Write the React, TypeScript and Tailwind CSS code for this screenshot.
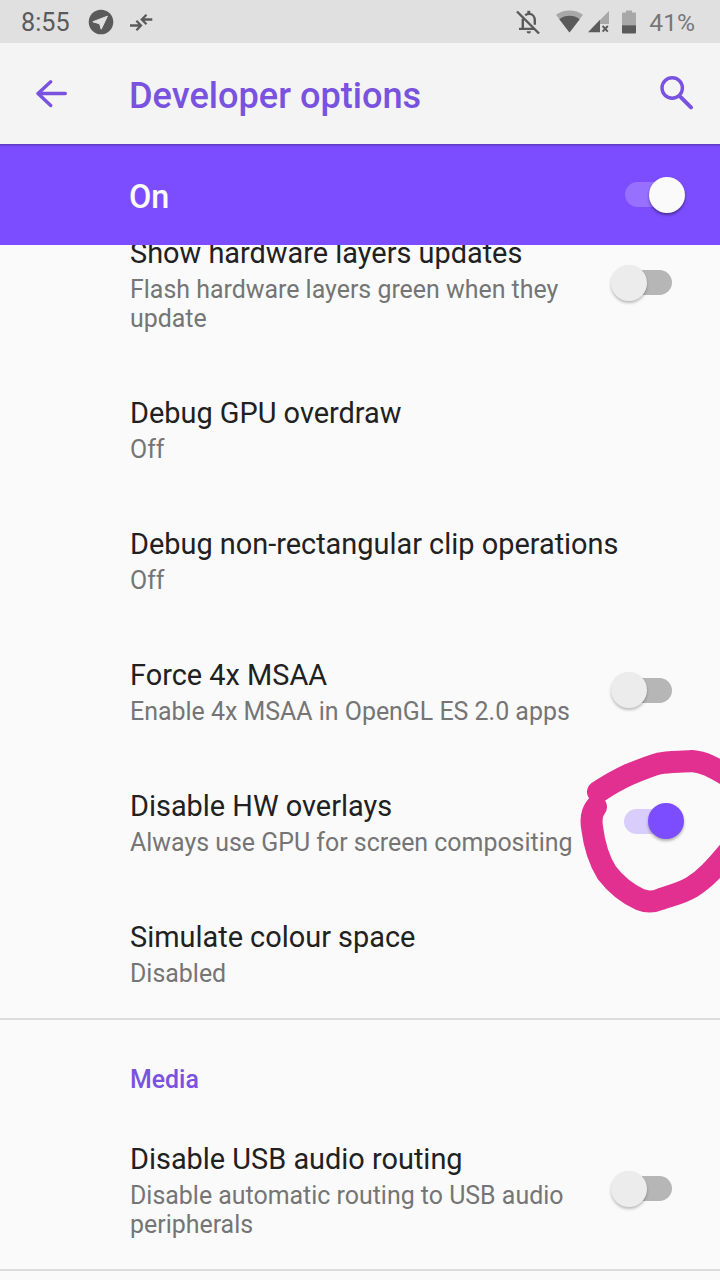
import React from 'react';
import clsx from 'clsx';

interface Option {
  id: string;
  title: string;
  summary: string;
  checked?: boolean;
}

const rendering: Option[] = [
  { id: 'hw-layers', title: 'Show hardware layers updates', summary: 'Flash hardware layers green when they update', checked: false },
  { id: 'overdraw', title: 'Debug GPU overdraw', summary: 'Off' },
  { id: 'clip', title: 'Debug non-rectangular clip operations', summary: 'Off' },
  { id: 'msaa', title: 'Force 4x MSAA', summary: 'Enable 4x MSAA in OpenGL ES 2.0 apps', checked: false },
  { id: 'overlays', title: 'Disable HW overlays', summary: 'Always use GPU for screen compositing', checked: true },
  { id: 'colour', title: 'Simulate colour space', summary: 'Disabled' }
];

const media: Option[] = [
  { id: 'usb', title: 'Disable USB audio routing', summary: 'Disable automatic routing to USB audio peripherals', checked: false }
];

const Toggle: React.FC<{ checked: boolean; inverse?: boolean }> = ({ checked, inverse }) => (
  <span role="switch" aria-checked={checked} className="flex h-9 w-[74px] shrink-0 items-center justify-center">
    <span
      className={clsx(
        'flex h-[25px] w-12 shrink-0 items-center rounded-full',
        inverse ? 'bg-[#9770ff]' : checked ? 'bg-[#d9cdfb]' : 'bg-[#b6b6b6]'
      )}
    >
      <span
        className={clsx(
          'size-9 shrink-0 rounded-full',
          checked ? 'ml-6' : '-ml-[13px]',
          inverse ? 'bg-[#fafafa] shadow-[0_2px_3px_rgba(0,0,0,0.4)]' : checked ? 'bg-[#7c4dff] shadow-[0_2px_3px_rgba(0,0,0,0.3)]' : 'bg-[#ececec] shadow-[0_2px_3px_rgba(0,0,0,0.25)]'
        )}
      />
    </span>
  </span>
);

const StatusBar: React.FC = () => (
  <div className="flex h-[43px] shrink-0 items-center justify-between bg-[#e0e0e0] pl-[21px] pr-[25px] text-[#5a5a5a]">
    <div className="flex items-center">
      <span className="w-[67px] text-[25.2px] leading-[43px] pt-[2px]">8:55</span>
      <svg className="size-[26px]" viewBox="0 0 26 26">
        <circle cx="13" cy="13" r="12.3" fill="currentColor" />
        <path d="M4.8 12.8 19.4 7.2 13.2 20.2 11.6 14.8Z" fill="#e0e0e0" stroke="#e0e0e0" strokeWidth="1" strokeLinejoin="round" />
      </svg>
      <svg className="ml-[15px] h-5 w-6" viewBox="0 0 24 20" fill="none" stroke="currentColor" strokeWidth="2.3">
        <path d="M1 13.5H12M7.4 8.8 12 13.5 7.4 18.2M23.3 7.5H13M17.5 2.8 12.8 7.5 17.5 12.2" />
      </svg>
    </div>
    <div className="flex items-center">
      <svg className="h-[26px] w-6" viewBox="0 0 24 26" fill="none" stroke="currentColor" strokeWidth="2.4">
        <path d="M1 2.5 23 24.5" />
        <path d="M9.2 6.2C10.5 5.2 11.6 4.9 12.8 4.9 17 4.9 18.8 8 18.8 11.5V15.8M6.8 9.8V19.9M3 19.9H18.2" />
        <path d="M12.8 1.8V5" strokeWidth="3" />
        <path d="M10.6 22.2H15A2.2 2.2 0 0 1 10.6 22.2Z" fill="currentColor" stroke="none" />
      </svg>
      <svg className="ml-[16px] h-[23px] w-[27px]" viewBox="0 0 27 23">
        <path d="M13.5 22.5 0 4.8C7.5-1 19.5-1 27 4.8Z" fill="#a8a8a8" />
        <path d="M13.5 22.5 3.3 9.2C9 4.6 18 4.6 23.7 9.2Z" fill="currentColor" />
      </svg>
      <svg className="ml-[5px] h-[23px] w-[21px]" viewBox="0 0 21 23">
        <path d="M21 1V14H12V10Z" fill="#a8a8a8" />
        <path d="M0 22.3 12 9.8V22.3Z" fill="currentColor" />
        <path d="M14.6 16 19.8 21.6M19.8 16 14.6 21.6" stroke="currentColor" strokeWidth="1.9" />
      </svg>
      <svg className="ml-[13px] h-6 w-[14px]" viewBox="0 0 14 24">
        <path d="M0 3.6Q0 2.6 1 2.6H4V0.5H10V2.6H13Q14 2.6 14 3.6V15.5H0Z" fill="#a8a8a8" />
        <path d="M0 15.3H14V22.5Q14 23.5 13 23.5H1Q0 23.5 0 22.5Z" fill="currentColor" />
      </svg>
      <span className="ml-[13px] text-[24.6px] leading-[43px] pt-px text-[#777777]">41%</span>
    </div>
  </div>
);

const Row: React.FC<{ option: Option }> = ({ option }) => (
  <div className="flex items-center pl-[130px] pr-[35px] pt-[31px] pb-8">
    <div className="min-w-0 flex-1">
      <div className="whitespace-nowrap text-[28.9px] leading-[34px] text-[#212121]">{option.title}</div>
      <div className="mt-[5px] text-[24.93px] leading-[29px] text-[#757575]">{option.summary}</div>
    </div>
    {option.checked !== undefined && (
      <div className="-mt-1">
        <Toggle checked={option.checked} />
      </div>
    )}
  </div>
);

const App: React.FC = () => (
  <div className="relative flex h-[1280px] w-[720px] flex-col overflow-hidden bg-[#fafafa] font-['Roboto',sans-serif]">
    <StatusBar />

    <header className="flex h-[101px] shrink-0 items-center bg-[#f4f4f4] pl-9 pr-[26px] text-[#7952e0]">
      <svg className="h-7 w-8" viewBox="0 0 32 28" fill="none" stroke="currentColor" strokeWidth="3.4" strokeLinecap="round" strokeLinejoin="round">
        <path d="M2 13.500H29.3M14.7 1.8 2 13.500 14.7 25.5" />
      </svg>
      <h1 className="ml-[61px] flex-1 pt-1 text-[36.15px] leading-[42px] font-medium">Developer options</h1>
      <svg className="-mt-px size-[34px]" viewBox="0 0 34 34" fill="none" stroke="currentColor" strokeWidth="3.4" strokeLinecap="round">
        <circle cx="12.2" cy="12" r="10.2" />
        <path d="M21 21.4 31 31.3" strokeWidth="4" />
      </svg>
    </header>

    <div className="flex h-[101px] shrink-0 items-center justify-between bg-[#7c4dff] pl-[129px] pr-[34px] shadow-[inset_0_4px_3px_-3px_rgba(0,0,0,0.35)]">
      <span className="pt-1 text-[32.4px] leading-[38px] font-medium text-[#fafafa]">On</span>
      <Toggle checked inverse />
    </div>

    <main className="flex-1 overflow-hidden">
      <section className="-mt-10 h-[815px] border-b-2 border-[#dcdcdc]">
        {rendering.map((option) => (
          <Row key={option.id} option={option} />
        ))}
      </section>
      <section className="h-[251px] border-b-2 border-[#dcdcdc]">
        <h2 className="h-[91px] pl-[130px] pt-[45px] text-[24.9px] leading-[30px] font-medium text-[#7952e0]">Media</h2>
        {media.map((option) => (
          <Row key={option.id} option={option} />
        ))}
      </section>
    </main>

    {/* Marker stroke around the overlays switch */}
    <svg
      className="pointer-events-none absolute right-0 top-[730px] h-[200px] w-[160px]"
      viewBox="0 0 160 200"
      fill="none"
      stroke="#e1308f"
      strokeWidth="22"
      strokeLinecap="round"
      strokeLinejoin="round"
    >
      <path d="M38 62C47 56 57 50 69 44.500C80 40 90 36 99 33.500C108 31.500 120 32 132 31C144 32 153 37 168 46" />
      <path d="M36 77C31 83 31 90 32 97C34 113 38 129 47 143C57 156 68 164 80 169.500C86 172 94 172 101 169C113 165 122 163 132 157C145 149 155 138 170 120" />
    </svg>
  </div>
);

export default App;
